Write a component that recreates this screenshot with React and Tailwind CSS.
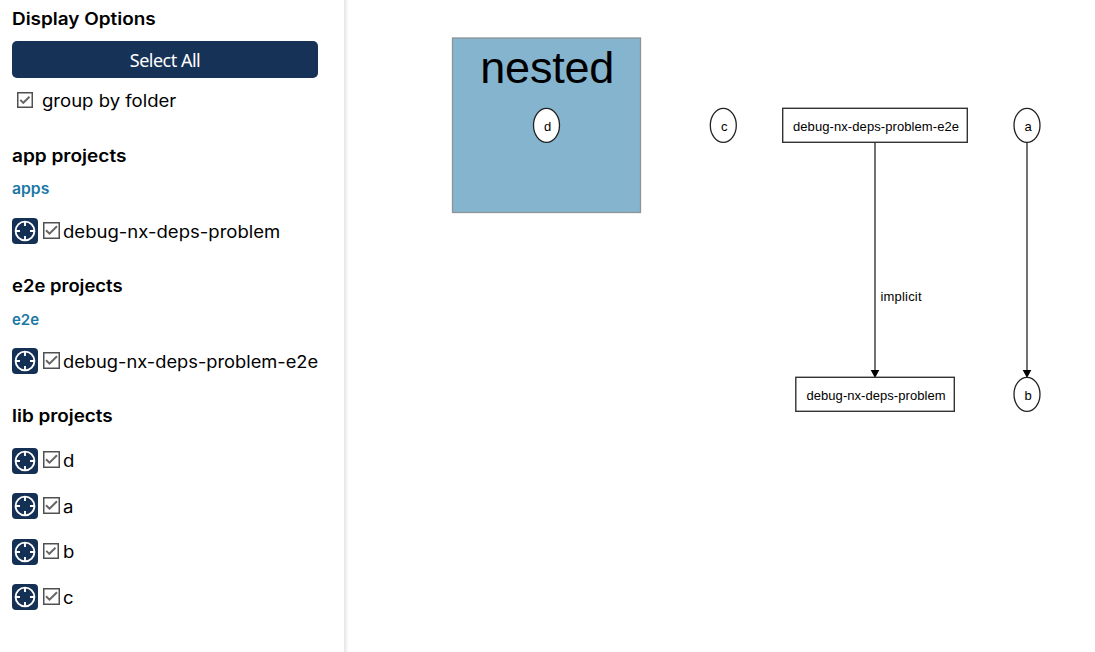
import React from "react";

function FocusIcon() {
  return (
    <button className="h-[26px] w-[26px] shrink-0 rounded-[4px] bg-[#143055]" aria-label="Focus">
      <svg width="26" height="26" viewBox="0 0 26 26" fill="none" stroke="#fff" strokeWidth="1.9">
        <circle cx="13" cy="13" r="9.4" />
        <path d="M13 3.5V8M13 18v4.5M3.5 13H8M18 13h4.5" />
      </svg>
    </button>
  );
}

function Check({ small }) {
  const size = small ? 16 : 17;
  return (
    <svg className="shrink-0" width={size} height={size} viewBox={`0 0 ${size} ${size}`} fill="none">
      <rect x="0.75" y="0.75" width={size - 1.5} height={size - 1.5} fill="#fff" stroke="#505050" strokeWidth="1.5" />
      {small ? (
        <path d="M3.3 7.8 6.3 10.8 12.5 4.7" stroke="#666" strokeWidth="1.9" />
      ) : (
        <path d="M3 8.2 6.5 11.7 14 4.2" stroke="#666" strokeWidth="2" />
      )}
    </svg>
  );
}

function Project({ name, small, text = "scale-x-[1.09]" }) {
  return (
    <div className="flex h-[45.5px] items-center">
      <FocusIcon />
      <span className="mb-[2px] ml-[5px] flex w-[20px] shrink-0">
        <Check small={small} />
      </span>
      <span className={`mt-px origin-left whitespace-nowrap text-[17px] leading-6 ${text}`}>{name}</span>
    </div>
  );
}

function Heading({ children, text }) {
  return (
    <h4 className="flex h-8 items-center whitespace-nowrap pt-px text-[17px] font-semibold">
      <span className={`origin-left ${text}`}>{children}</span>
    </h4>
  );
}

function Sidebar() {
  return (
    <aside className="flex h-full w-[344px] shrink-0 flex-col bg-white px-3 font-['Inter',sans-serif] text-black">
      <div className="flex h-[41px] items-start pt-[3px]">
        <Heading text="scale-x-[1.113]">Display Options</Heading>
      </div>
      <button className="h-[37px] w-[306px] rounded-[5px] bg-[#173257] pt-[2px] font-['Noto_Sans',sans-serif] text-[18px] tracking-[-0.5px] text-white">
        Select All
      </button>
      <label className="flex h-[46px] items-center pl-[5px]">
        <span className="mb-[3px] w-[25px]">
          <Check small />
        </span>
        <span className="origin-left scale-x-[1.09] pt-px text-[17px]">group by folder</span>
      </label>

      <section className="mt-4">
        <Heading text="scale-x-[1.12]">app projects</Heading>
        <h5 className="flex h-[36.5px] items-center pb-[2px] text-[15px] font-semibold text-[#1b77a4]">
          <span className="origin-left scale-x-[1.05]">apps</span>
        </h5>
        <Project name="debug-nx-deps-problem" />
      </section>
      <section className="mt-4">
        <Heading text="scale-x-[1.085]">e2e projects</Heading>
        <h5 className="flex h-[36.5px] items-center pb-px text-[15px] font-semibold text-[#1b77a4]">e2e</h5>
        <Project name="debug-nx-deps-problem-e2e" text="scale-x-[1.075]" />
      </section>
      <section className="mt-4">
        <Heading text="scale-x-[1.11]">lib projects</Heading>
        <div className="pt-[6px]">
          <Project name="d" />
          <Project name="a" />
          <Project name="b" small />
          <Project name="c" />
        </div>
      </section>
    </aside>
  );
}

function Oval({ x, y, label }) {
  return (
    <g>
      <ellipse cx={x} cy={y} rx="13" ry="17" fill="#fff" stroke="#222" strokeWidth="1.3" />
      <text x={x + 1} y={y + 5.5} textAnchor="middle" fontSize="13">
        {label}
      </text>
    </g>
  );
}

function Graph() {
  return (
    <svg className="block h-full w-full font-['Liberation_Sans',Arial,sans-serif]" viewBox="348 0 747 652" fill="#000">
      <rect x="452.5" y="38" width="188" height="174.5" fill="#84b4ce" stroke="#8e9396" strokeWidth="1.3" />
      <text x="547.3" y="83" fontSize="45" textAnchor="middle" textLength="134" lengthAdjust="spacing">
        nested
      </text>
      <g stroke="#444" strokeWidth="1.5">
        <path d="M875 142V371M1027 142V371" />
      </g>
      <path d="M870.7 370h8.6l-4.3 8zM1022.7 370h8.6l-4.3 8z" />
      <Oval x={546.5} y={125.3} label="d" />
      <Oval x={723.3} y={125.3} label="c" />
      <Oval x={1027} y={125.3} label="a" />
      <Oval x={1027} y={394.3} label="b" />
      <rect x="782.7" y="108.3" width="184.6" height="34" fill="#fff" stroke="#333" strokeWidth="1.4" />
      <text x="793" y="131" fontSize="13" textLength="166">debug-nx-deps-problem-e2e</text>
      <rect x="795.8" y="377.3" width="158.5" height="34" fill="#fff" stroke="#333" strokeWidth="1.4" />
      <text x="806.5" y="400" fontSize="13" textLength="139">debug-nx-deps-problem</text>
      <text x="880.5" y="301" fontSize="13" textLength="41">implicit</text>
    </svg>
  );
}

export default function App() {
  return (
    <div className="flex h-[652px] w-[1095px] overflow-hidden bg-white">
      <Sidebar />
      <div className="w-[4px] shrink-0 bg-linear-to-r from-[#e6e6e6] to-[#fafafa]" />
      <main className="min-w-0 flex-1">
        <Graph />
      </main>
    </div>
  );
}
